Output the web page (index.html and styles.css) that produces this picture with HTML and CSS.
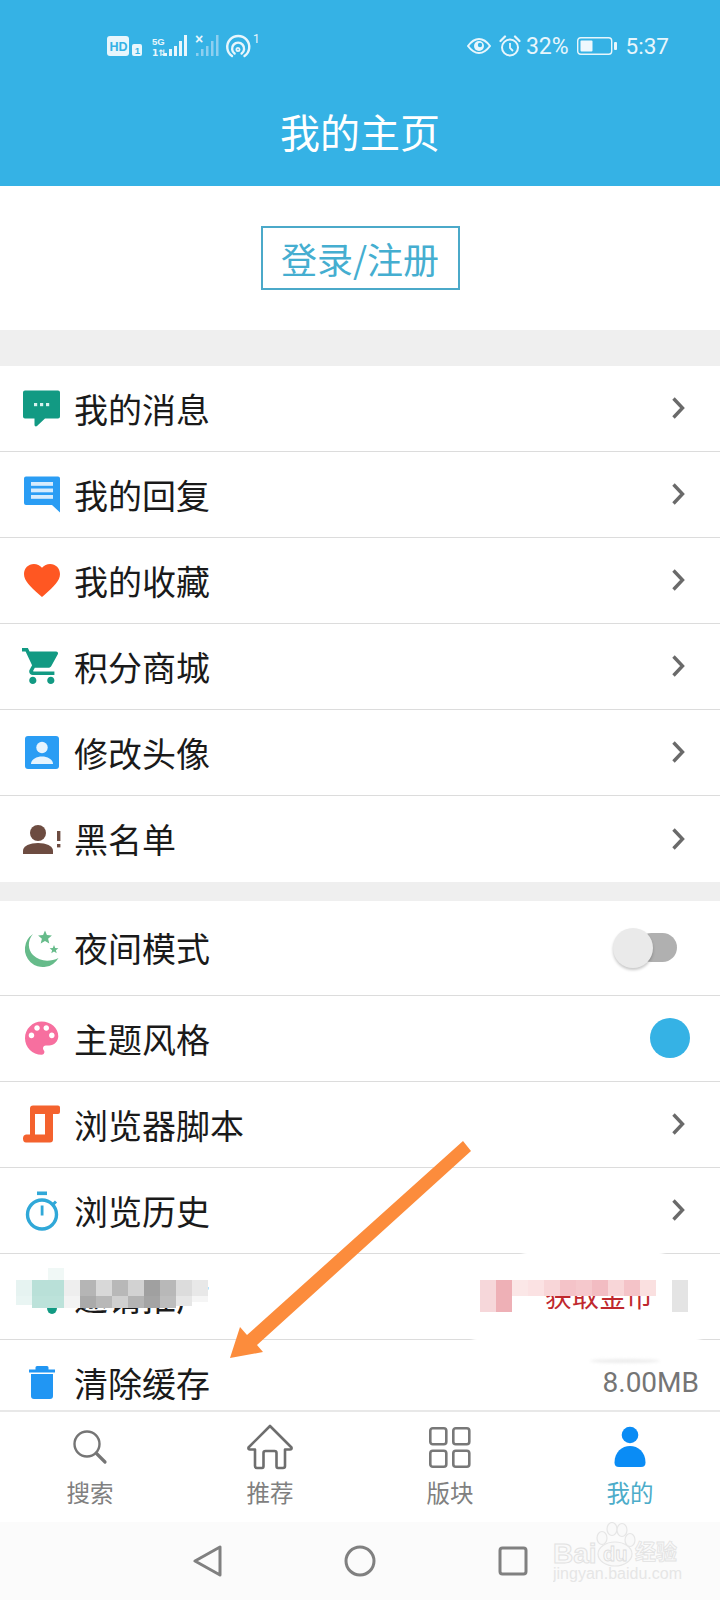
FILE: index.html
```html
<!DOCTYPE html>
<html lang="zh-CN">
<head>
<meta charset="utf-8">
<title>我的主页</title>
<link rel="stylesheet" href="styles.css">
</head>
<body>
<div class="page">
  <header class="header">
    <div class="status">
      <svg class="status-left" width="152" height="24" viewBox="0 0 152 24">
        <rect x="0" y="2" width="22" height="20" rx="3" fill="#e8f6fc"/>
        <text x="2.5" y="17" class="st-hd">HD</text>
        <rect x="25" y="10" width="10" height="12" rx="2" fill="#e8f6fc"/>
        <text x="27.8" y="20" class="st-sim">1</text>
        <text x="45" y="11" class="st-5g">5G</text>
        <text x="45" y="22" class="st-1">1⇅</text>
        <g fill="#e8f6fc">
          <rect x="57" y="19" width="3" height="3"/><rect x="62" y="15" width="3" height="7"/><rect x="67" y="12" width="3" height="10"/><rect x="72" y="7" width="3" height="15"/><rect x="77" y="1" width="3" height="21"/>
        </g>
        <text x="88" y="10" class="st-x">×</text>
        <g fill="#8ecff0">
          <rect x="89" y="19" width="2.5" height="3"/><rect x="94" y="15" width="2.5" height="7"/><rect x="99" y="12" width="2.5" height="10"/><rect x="104" y="7" width="2.5" height="15"/><rect x="109" y="1" width="2.5" height="21"/>
        </g>
        <g fill="none" stroke="#e8f6fc" stroke-width="2.4" stroke-linecap="round">
          <path d="M125 22A11 11 0 1 1 137.5 22"/>
          <path d="M127.6 19.5A6 6 0 1 1 134.6 19.5"/>
          <circle cx="131" cy="15.5" r="1.6" stroke-width="1.8"/>
        </g>
        <text x="146" y="9" class="st-sup">1</text>
      </svg>
      <div class="status-right">
        <svg width="24" height="16" viewBox="0 0 24 16">
          <path d="M1 8C5 2.500 8.500 1 12 1s7 1.500 11 7c-4 5.500-7.500 7-11 7S5 13.500 1 8z" fill="none" stroke="#e8f6fc" stroke-width="2"/>
          <circle cx="12" cy="8" r="5" fill="#e8f6fc"/>
          <circle cx="13" cy="7" r="2.200" fill="#35b2e5"/>
        </svg>
        <svg class="st-alarm" width="22" height="22" viewBox="0 0 22 22">
          <circle cx="11" cy="12.500" r="8" fill="none" stroke="#e8f6fc" stroke-width="2"/>
          <path d="M11 8v5l3 3" fill="none" stroke="#e8f6fc" stroke-width="1.800"/>
          <path d="M1.500 6L6 1.500M20.500 6L16 1.500" stroke="#e8f6fc" stroke-width="2.200" stroke-linecap="round"/>
        </svg>
        <span class="st-text st-pct">32%</span>
        <svg class="st-batt" width="41" height="18" viewBox="0 0 41 18">
          <rect x="0.700" y="0.700" width="34" height="16.600" rx="3" fill="none" stroke="#e8f6fc" stroke-width="1.400"/>
          <rect x="3.500" y="3.500" width="12" height="11" rx="1" fill="#eef8fd"/>
          <rect x="37" y="5" width="3" height="8" rx="1" fill="#e8f6fc"/>
        </svg>
        <span class="st-text st-time">5:37</span>
      </div>
    </div>
    <h1 class="title">我的主页</h1>
  </header>

  <main class="main">
    <section class="login">
      <div class="login-btn">登录/注册</div>
    </section>

    <section class="group">
      <div class="row">
        <svg class="ico" viewBox="0 0 40 40"><path d="M3 2.500h33a2 2 0 0 1 2 2v24a2 2 0 0 1-2 2H23l-8 7.500c-1 .8-2.500.3-2.500-1.200v-6.300H3a2 2 0 0 1-2-2v-24a2 2 0 0 1 2-2z" fill="#129a83"/><g fill="#d8f3ee"><rect x="12" y="15" width="3.200" height="3.200"/><rect x="18" y="15" width="3.200" height="3.200"/><rect x="24" y="15" width="3.200" height="3.200"/></g></svg>
        <span class="label">我的消息</span>
        <svg class="chev" viewBox="0 0 14 24"><path d="M2.500 2.500L11.500 12L2.500 21.500"/></svg>
      </div>
      <div class="row">
        <svg class="ico" viewBox="0 0 40 40"><path d="M4 2.500h32a2 2 0 0 1 2 2v34l-8-7.500H4a2 2 0 0 1-2-2v-24.500a2 2 0 0 1 2-2z" fill="#2a9df4"/><g fill="#d6ecfd"><rect x="9" y="8" width="22" height="3.800"/><rect x="9" y="14.500" width="22" height="3.800"/><rect x="9" y="21" width="22" height="3.800"/></g></svg>
        <span class="label">我的回复</span>
        <svg class="chev" viewBox="0 0 14 24"><path d="M2.500 2.500L11.500 12L2.500 21.500"/></svg>
      </div>
      <div class="row">
        <svg class="ico" viewBox="0 0 40 40"><path transform="translate(-1.600 -1.400) scale(1.800)" d="M12 21.350l-1.450-1.320C5.400 15.360 2 12.280 2 8.500 2 5.420 4.420 3 7.500 3c1.740 0 3.410.81 4.500 2.090C13.090 3.810 14.760 3 16.500 3 19.580 3 22 5.420 22 8.500c0 3.780-3.400 6.860-8.550 11.540L12 21.350z" fill="#ff5722"/></svg>
        <span class="label">我的收藏</span>
        <svg class="chev" viewBox="0 0 14 24"><path d="M2.500 2.500L11.500 12L2.500 21.500"/></svg>
      </div>
      <div class="row">
        <svg class="ico" viewBox="0 0 40 40"><path transform="translate(-1.800 -1.600) scale(1.800)" d="M7 18c-1.100 0-1.990.9-1.990 2S5.900 22 7 22s2-.9 2-2-.9-2-2-2zM1 2v2h2l3.600 7.590-1.350 2.450c-.16.28-.25.61-.25.96 0 1.100.9 2 2 2h12v-2H7.420c-.14 0-.25-.11-.25-.25l.03-.12.9-1.630h7.450c.75 0 1.410-.41 1.750-1.030l3.580-6.490c.08-.14.12-.31.12-.48 0-.55-.45-1-1-1H5.210l-.94-2H1zm16 16c-1.100 0-1.990.9-1.990 2s.89 2 1.990 2 2-.9 2-2-.9-2-2-2z" fill="#129a83"/></svg>
        <span class="label">积分商城</span>
        <svg class="chev" viewBox="0 0 14 24"><path d="M2.500 2.500L11.500 12L2.500 21.500"/></svg>
      </div>
      <div class="row">
        <svg class="ico" viewBox="0 0 40 40"><rect x="3" y="4" width="34" height="33" rx="3" fill="#2a9df4"/><circle cx="20" cy="15.500" r="5.700" fill="#e6f4fe"/><path d="M9 32c0-5 6-7.500 11-7.500S31 27 31 32z" fill="#e6f4fe"/></svg>
        <span class="label">修改头像</span>
        <svg class="chev" viewBox="0 0 14 24"><path d="M2.500 2.500L11.500 12L2.500 21.500"/></svg>
      </div>
      <div class="row row-last">
        <svg class="ico" viewBox="0 0 40 40"><circle cx="16" cy="14" r="8" fill="#6d4c41"/><path d="M1 35v-3.500C1 27 8 24 16 24s15 3 15 7.500V35z" fill="#6d4c41"/><rect x="35" y="12" width="3.400" height="10" fill="#6d4c41"/><rect x="35" y="25" width="3.400" height="3.400" fill="#6d4c41"/></svg>
        <span class="label">黑名单</span>
        <svg class="chev" viewBox="0 0 14 24"><path d="M2.500 2.500L11.500 12L2.500 21.500"/></svg>
      </div>
    </section>

    <section class="group group-two">
      <div class="row row-tall">
        <svg class="ico" viewBox="0 0 40 40"><path d="M11 6A18 18 0 1 0 36.500 30C28 34 18 34 11 27C6 22 5 13 11 6Z" fill="#66bb8a"/><path d="M23 2.500l1.900 4.600 5 .4-3.800 3.200 1.200 4.800-4.300-2.600-4.300 2.600 1.200-4.800-3.800-3.200 5-.4z" fill="#66bb8a"/><path d="M32 17l1.200 3 3.200.2-2.500 2 .8 3.100-2.700-1.700-2.700 1.700.8-3.100-2.500-2 3.200-.2z" fill="#66bb8a"/></svg>
        <span class="label">夜间模式</span>
        <div class="switch"><span class="switch-track"></span><span class="switch-thumb"></span></div>
      </div>
      <div class="row">
        <svg class="ico" viewBox="0 0 40 40"><path transform="translate(-2.550 -2.050) scale(1.850)" d="M12 3c-4.970 0-9 4.030-9 9s4.030 9 9 9c.83 0 1.500-.67 1.500-1.500 0-.39-.15-.74-.39-1.010-.23-.26-.38-.61-.38-.99 0-.83.67-1.500 1.500-1.500H16c2.760 0 5-2.240 5-5 0-4.420-4.030-8-9-8zm-5.500 9c-.83 0-1.500-.67-1.500-1.500S5.670 9 6.500 9 8 9.670 8 10.500 7.330 12 6.500 12zm3-4C8.670 8 8 7.330 8 6.500S8.670 5 9.500 5s1.500.67 1.500 1.500S10.330 8 9.500 8zm5 0c-.83 0-1.500-.67-1.500-1.500S13.670 5 14.500 5s1.500.67 1.500 1.500S15.330 8 14.500 8zm3 4c-.83 0-1.500-.67-1.500-1.500S16.670 9 17.500 9s1.500.67 1.500 1.500-.67 1.500-1.500 1.500z" fill="#f76f9f"/></svg>
        <span class="label">主题风格</span>
        <span class="theme-dot"></span>
      </div>
      <div class="row">
        <svg class="ico" viewBox="0 0 40 40"><path d="M11 1.500H36Q38 1.500 38 3.500V8Q38 10 36 10H31V35.500Q31 38.500 28 38.500H4Q1 38.500 1 34.500Q1 31 4 30.500H8V4.500Q8 1.500 11 1.500ZM13 10V30.500H23V10Z" fill="#f4622e" fill-rule="evenodd"/></svg>
        <span class="label">浏览器脚本</span>
        <svg class="chev" viewBox="0 0 14 24"><path d="M2.500 2.500L11.500 12L2.500 21.500"/></svg>
      </div>
      <div class="row">
        <svg class="ico" viewBox="0 0 40 40"><circle cx="20" cy="24.500" r="14.500" fill="none" stroke="#30a8d8" stroke-width="3.400"/><rect x="15" y="1.500" width="10" height="3.600" fill="#30a8d8"/><rect x="18.700" y="15.500" width="2.800" height="10" fill="#30a8d8"/><path d="M31 14.500l3-3" stroke="#30a8d8" stroke-width="3"/></svg>
        <span class="label">浏览历史</span>
        <svg class="chev" viewBox="0 0 14 24"><path d="M2.500 2.500L11.500 12L2.500 21.500"/></svg>
      </div>
      <div class="row row-censored">
        <svg class="ico" viewBox="0 0 40 40"><ellipse cx="30" cy="32" rx="5" ry="6" fill="#129a83"/></svg>
        <span class="label">邀请推广</span>
        <span class="coin">获取金币</span>
        <svg class="chev" viewBox="0 0 14 24"><path d="M2.500 2.500L11.500 12L2.500 21.500"/></svg>
        <span class="erase erase-top"></span>
        <span class="erase erase-bottom"></span>
        <svg class="mosaic mosaic-left" width="192" height="44" viewBox="0 0 192 44">
          <rect x="32" y="0" width="16" height="12" fill="#f0f8f6"/>
          <g transform="translate(0 12)">
            <rect width="16" height="16" fill="#e6f3f1"/><rect x="16" width="16" height="16" fill="#b9e0d8"/><rect x="32" width="16" height="16" fill="#b9e0d8"/><rect x="48" width="16" height="16" fill="#eeeeee"/><rect x="64" width="16" height="16" fill="#b5b5b5"/><rect x="80" width="16" height="16" fill="#d8d8d8"/><rect x="96" width="16" height="16" fill="#b8b8b8"/><rect x="112" width="16" height="16" fill="#d2d2d2"/><rect x="128" width="16" height="16" fill="#a0a0a0"/><rect x="144" width="16" height="16" fill="#b8b8b8"/><rect x="160" width="16" height="16" fill="#dcdcdc"/><rect x="176" width="16" height="16" fill="#e8e8e8"/>
          </g>
          <g transform="translate(0 28)">
            <rect width="16" height="9" fill="#e9f5f3"/><rect x="16" width="16" height="12" fill="#bce2da"/><rect x="32" width="16" height="12" fill="#bce2da"/><rect x="48" width="16" height="12" fill="#f3f3f3"/><rect x="64" width="16" height="12" fill="#aaaaaa"/><rect x="80" width="16" height="12" fill="#b8b8b8"/><rect x="96" width="16" height="12" fill="#d0d0d0"/><rect x="112" width="16" height="12" fill="#b4b4b4"/><rect x="128" width="16" height="12" fill="#a4a4a4"/><rect x="144" width="16" height="12" fill="#bdbdbd"/><rect x="160" width="16" height="10" fill="#e6e6e6"/><rect x="176" width="16" height="6" fill="#f5f5f5"/>
          </g>
        </svg>
        <svg class="mosaic mosaic-right" width="208" height="32" viewBox="0 0 208 32">
          <rect width="16" height="32" fill="#f6d7da"/><rect x="16" width="16" height="32" fill="#eeb0b6"/>
          <rect x="32" width="16" height="16" fill="#fbe7e7"/><rect x="48" width="16" height="16" fill="#fbe2e3"/><rect x="64" width="16" height="16" fill="#f8d6d8"/><rect x="80" width="16" height="16" fill="#f4c3c8"/><rect x="96" width="16" height="16" fill="#f5c8cc"/><rect x="112" width="16" height="16" fill="#f2bcc2"/><rect x="128" width="16" height="16" fill="#f8d6d8"/><rect x="144" width="16" height="16" fill="#f4c3c8"/><rect x="160" width="16" height="16" fill="#fae0e0"/>
          <rect x="192" width="16" height="32" fill="#e4e4e4"/>
        </svg>
      </div>
      <div class="row row-last">
        <svg class="ico" viewBox="0 0 40 40"><path d="M15 3h10a1.500 1.500 0 0 1 1.500 1.500V6.500H33V9.500H7V6.500h6.500V4.500A1.500 1.500 0 0 1 15 3z" fill="#2196f3"/><path d="M9 11H31V33a3 3 0 0 1-3 3H12a3 3 0 0 1-3-3z" fill="#2196f3"/></svg>
        <span class="label">清除缓存</span>
        <span class="value">8.00MB</span>
        <span class="smudge"></span>
      </div>
    </section>
  </main>

  <nav class="tabbar">
    <div class="tab">
      <svg class="tab-ico" viewBox="0 0 46 46"><circle cx="20" cy="20" r="12.500" fill="none" stroke="#757575" stroke-width="2.400"/><path d="M29.500 29.500L38 38" stroke="#757575" stroke-width="3.200" stroke-linecap="round"/></svg>
      <span class="tab-label">搜索</span>
    </div>
    <div class="tab">
      <svg class="tab-ico" viewBox="0 0 46 46"><path d="M23 2L44.500 23.500Q45 25.500 43 25.500H38V42Q38 44 36 44H31Q29.500 44 29.500 42V29Q29.500 27 27.500 27H18.500Q16.500 27 16.500 29V42Q16.500 44 15 44H10Q8 44 8 42V25.500H3Q1 25.500 1.500 23.500Z" fill="none" stroke="#6e6e6e" stroke-width="2.600" stroke-linejoin="round"/></svg>
      <span class="tab-label">推荐</span>
    </div>
    <div class="tab">
      <svg class="tab-ico" viewBox="0 0 46 46"><g fill="none" stroke="#787878" stroke-width="2.600"><rect x="3.300" y="4.300" width="16" height="16" rx="2.500"/><rect x="26.300" y="4.300" width="16" height="16" rx="2.500"/><rect x="3.300" y="26.700" width="16" height="16" rx="2.500"/><rect x="26.300" y="26.700" width="16" height="16" rx="2.500"/></g></svg>
      <span class="tab-label">版块</span>
    </div>
    <div class="tab">
      <svg class="tab-ico" viewBox="0 0 46 46"><circle cx="23" cy="11" r="8.300" fill="#0a8cf5"/><path d="M7.500 38.500C7.500 28 15 22 23 22S38.500 28 38.500 38.500Q38.500 43 34 43H12Q7.500 43 7.500 38.500Z" fill="#0a8cf5"/></svg>
      <span class="tab-label tab-label-active">我的</span>
    </div>
  </nav>

  <footer class="sysnav">
    <svg class="sys-ico" viewBox="0 0 32 32"><path d="M4 16L29 2V30Z" fill="none" stroke="#808080" stroke-width="3" stroke-linejoin="round"/></svg>
    <svg class="sys-ico" viewBox="0 0 32 32"><circle cx="16" cy="16" r="14" fill="none" stroke="#808080" stroke-width="3"/></svg>
    <svg class="sys-ico" viewBox="0 0 32 32"><rect x="3" y="3" width="26" height="26" rx="2.500" fill="none" stroke="#808080" stroke-width="3"/></svg>
    <svg class="watermark" width="130" height="66" viewBox="0 0 130 66">
      <g fill="#f9f9f9" stroke="#e6e6e6" stroke-width="1.200">
        <ellipse cx="49" cy="16" rx="5" ry="6.500"/><ellipse cx="59" cy="7" rx="5" ry="6.500"/><ellipse cx="69" cy="8" rx="5" ry="6.500"/><ellipse cx="77" cy="18" rx="5" ry="6.500"/>
        <ellipse cx="62" cy="32" rx="17" ry="12"/>
      </g>
      <text x="0" y="41" class="wm-bai">Bai</text>
      <text x="50" y="39" class="wm-du">du</text>
      <text x="82" y="37" class="wm-cn">经验</text>
      <text x="0" y="57" class="wm-url">jingyan.baidu.com</text>
    </svg>
  </footer>

  <svg class="arrow" width="720" height="1600" viewBox="0 0 720 1600"><polygon points="463,1141 471,1151 257,1345 263,1352 230,1358 240,1327 247,1335" fill="#fc8c3c"/></svg>
</div>
</body>
</html>
```

FILE: styles.css
```css
* { box-sizing: border-box; }
html, body { margin: 0; padding: 0; background: #fff; }
body { font-family: "Noto Sans CJK SC", "Noto Sans", sans-serif; color: #1a1a1a; }

.page { position: relative; width: 720px; height: 1600px; display: flex; flex-direction: column; overflow: hidden; background: #fff; }

/* header */
.header { flex: none; height: 186px; background: #35b2e5; color: #fff; }
.status { height: 92px; display: flex; align-items: center; justify-content: space-between; padding: 0 51px 0 107px; }
.status-left { display: block; }
.status-right { display: flex; align-items: center; }
.st-hd { font: 700 12.5px "Liberation Sans", sans-serif; fill: #35b2e5; }
.st-sim { font: 700 9.5px "Liberation Sans", sans-serif; fill: #35b2e5; }
.st-5g { font: 700 9.5px "Liberation Sans", sans-serif; fill: #e8f6fc; }
.st-1 { font: 700 9px "DejaVu Sans", sans-serif; fill: #e8f6fc; }
.st-x { font: 700 14px "Liberation Sans", sans-serif; fill: #e8f6fc; }
.st-sup { font: 400 12px Roboto, sans-serif; fill: #e8f6fc; }
.st-text { font: 400 23px/1 Roboto, sans-serif; color: #e8f6fc; }
.st-alarm { margin-left: 8px; }
.st-pct { margin-left: 5px; }
.st-batt { margin-left: 8px; }
.st-time { margin-left: 8px; font-size: 22.5px; }
.title { margin: 0; height: 78px; font-size: 40px; font-weight: 400; line-height: 78px; text-align: center; color: #fff; }

/* main */
.main { flex: none; height: 1224px; overflow: hidden; background: #efefef; }
.login { height: 144px; display: flex; align-items: center; justify-content: center; background: #fff; margin-bottom: 36px; }
.login-btn { width: 199px; height: 64px; border: 2px solid #4ba9c9; display: flex; align-items: center; justify-content: center; font-size: 36px; line-height: 1; color: #45aed0; }

.group { background: #fff; }
.group-two { margin-top: 19px; }
.row { position: relative; height: 86px; display: flex; align-items: center; padding: 0 21px 1px 22px; border-bottom: 1px solid #dcdcdc; background: #fff; }
.row-last { border-bottom: 0; }
.row-tall { height: 95px; }
.ico { flex: none; width: 40px; height: 40px; overflow: visible; }
.label { position: relative; top: 1px; margin-left: 12px; font-size: 34px; line-height: 1.2; color: #1a1a1a; }
.chev { flex: none; margin-left: auto; margin-right: 14px; width: 14px; height: 24px; fill: none; stroke: #6a6a6a; stroke-width: 3.400; }
.value { margin-left: auto; font: 400 28px/1 Roboto, sans-serif; color: #757575; }

.switch { position: relative; margin-left: auto; margin-right: 22px; width: 64px; height: 40px; }
.switch-track { position: absolute; right: 0; top: 5px; width: 40px; height: 29px; border-radius: 15px; background: #b0b0b0; }
.switch-thumb { position: absolute; left: 0; top: 0; width: 40px; height: 40px; border-radius: 50%; background: #eaeaea; box-shadow: 0 2px 3px rgba(0, 0, 0, .22); }
.theme-dot { margin-left: auto; margin-right: 9px; width: 40px; height: 40px; border-radius: 50%; background: #35b2e5; }

/* censored row */
.coin { margin-left: auto; font-size: 27px; line-height: 1.2; color: #c0282d; margin-right: 18px; }
.row-censored .chev { margin-left: 0; }
.mosaic { position: absolute; }
.mosaic-left { left: 16px; top: 14px; }
.mosaic-right { left: 480px; top: 26px; }
.erase { position: absolute; height: 10px; background: #fff; filter: blur(2px); }
.erase-top { left: 523px; width: 140px; top: -5px; }
.erase-bottom { left: 473px; width: 227px; bottom: -5px; z-index: 1; }
.smudge { position: absolute; left: 590px; top: 19px; width: 70px; height: 4px; border-radius: 50%; background: #ececec; filter: blur(1.500px); }

/* tab bar */
.tabbar { flex: none; height: 112px; border-top: 2px solid #e8e8e8; padding-top: 12px; display: grid; grid-template-columns: repeat(4, 180px); background: #fff; }
.tab { display: flex; flex-direction: column; align-items: center; }
.tab-ico { width: 46px; height: 46px; }
.tab-label { margin-top: 5px; font-size: 23.500px; line-height: 34px; color: #808080; }
.tab-label-active { color: #4cacc9; }

/* system nav */
.sysnav { position: relative; flex: none; height: 78px; background: #fbfbfb; display: flex; align-items: center; justify-content: center; gap: 121px; }
.sys-ico { width: 32px; height: 32px; }
.watermark { position: absolute; left: 553px; top: 0; }
.wm-bai { font: 700 28px "Liberation Sans", sans-serif; fill: #f9f9f9; stroke: #e2e2e2; stroke-width: 1; }
.wm-du { font: 700 20px "Liberation Sans", sans-serif; fill: #f9f9f9; stroke: #dcdcdc; stroke-width: .8; }
.wm-cn { font: 700 21px "Noto Sans CJK SC", sans-serif; fill: #f9f9f9; stroke: #e2e2e2; stroke-width: .8; }
.wm-url { font: 400 16px "Liberation Sans", sans-serif; fill: #e6e6e6; }

/* annotation */
.arrow { position: absolute; left: 0; top: 0; pointer-events: none; }
```
